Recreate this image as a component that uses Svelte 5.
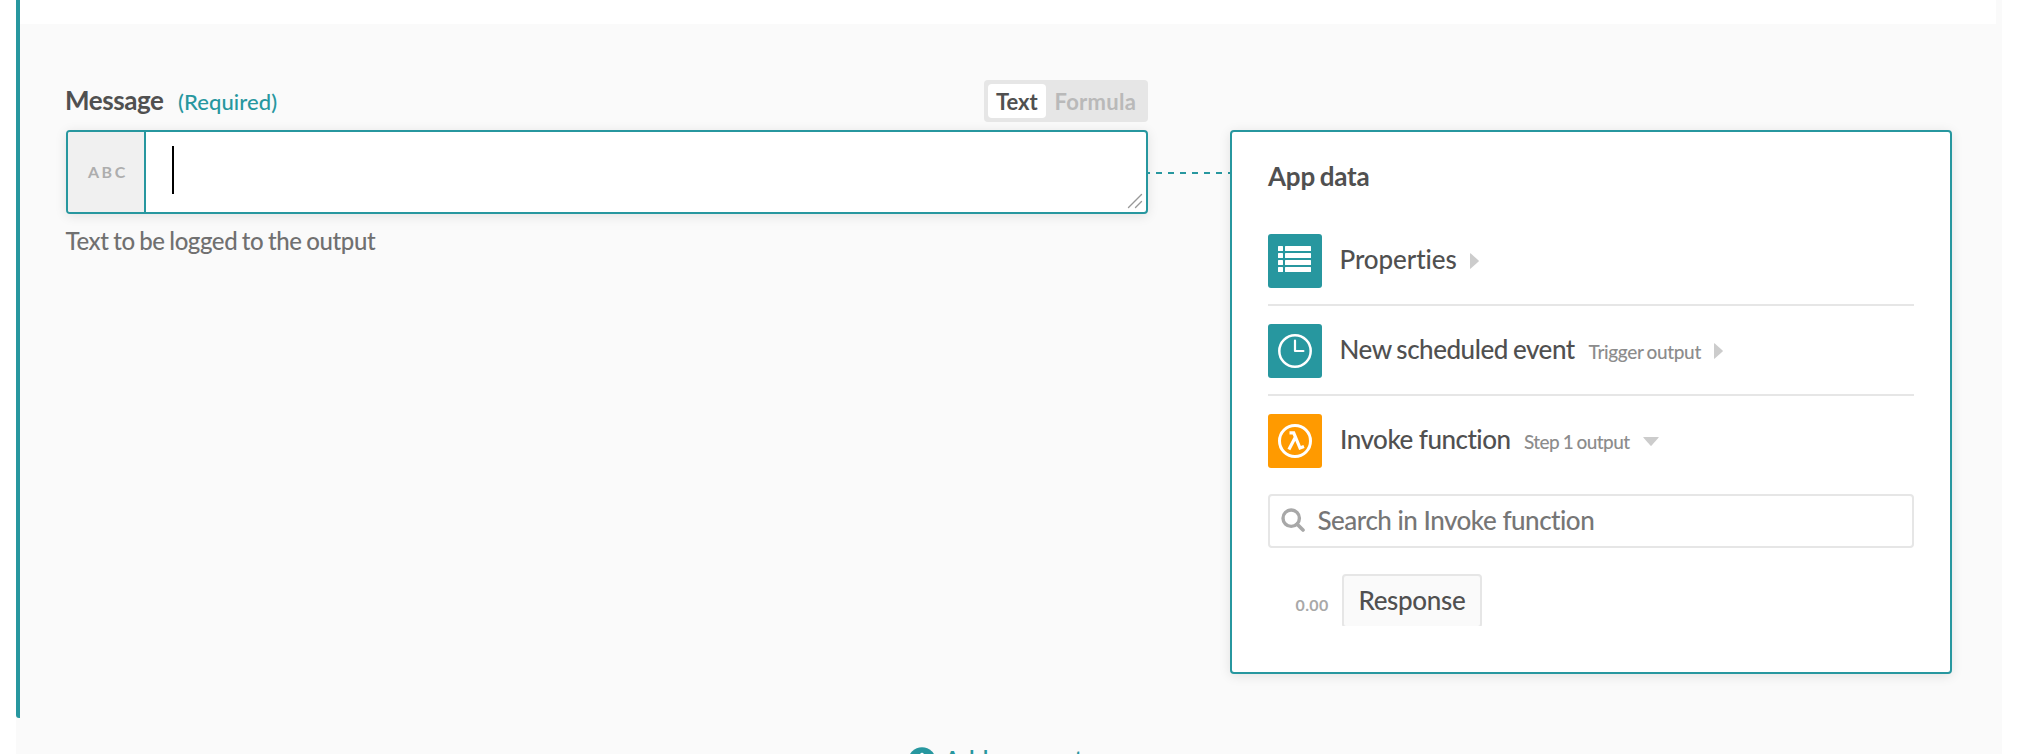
<script>
  let mode = $state('Text');
  const modes = ['Text', 'Formula'];
</script>

<main class="canvas">
  <section class="step">
    <div class="step-head"></div>
    <div class="step-body">
      <div class="field">
        <div class="field-top">
          <div class="label">
            <span class="label-name">Message</span>
            <span class="label-required">(Required)</span>
          </div>
          <div class="toggle">
            {#each modes as m}
              <button class={['toggle-item', m.toLowerCase(), { active: mode === m }]} onclick={() => (mode = m)}><span>{m}</span></button>
            {/each}
          </div>
        </div>
        <div class="input">
          <div class="input-type">ABC</div>
          <div class="input-area">
            <span class="caret"></span>
            <svg class="grip" width="16" height="16" viewBox="0 0 16 16">
              <path d="M1.5 14.5 14.5 1.5M8.5 14.5 14.5 8.5" fill="none" stroke="#989898" stroke-width="1.4" stroke-linecap="round" />
            </svg>
          </div>
        </div>
        <p class="hint">Text to be logged to the output</p>
      </div>

      <div class="connector"></div>

      <aside class="panel">
        <h2>App data</h2>

        <div class="row">
          <svg class="tile" width="54" height="54" viewBox="0 0 54 54">
            <rect width="54" height="54" rx="3" fill="#27979f" />
            <g fill="#fff">
              {#each [12, 19, 26, 33] as y}
                <rect x="10" {y} width="5" height="5" rx="0.5" />
                <rect x="17" {y} width="26" height="5" rx="0.5" />
              {/each}
            </g>
          </svg>
          <div class="row-text">
            <span class="name properties">Properties</span>
            <svg class="arrow" width="9" height="16" viewBox="0 0 9 16"><path d="M0 .6Q0 0 .8.5L8.6 7.4Q9.2 8 8.6 8.6L.8 15.5Q0 16 0 15.4Z" fill="#ccc" /></svg>
          </div>
        </div>

        <div class="row">
          <svg class="tile" width="54" height="54" viewBox="0 0 54 54">
            <rect width="54" height="54" rx="3" fill="#27979f" />
            <circle cx="27" cy="27" r="15.7" fill="none" stroke="#fff" stroke-width="2.5" />
            <path d="M27 16.6V27h8.4" fill="none" stroke="#fff" stroke-width="2.2" stroke-linecap="round" stroke-linejoin="round" />
          </svg>
          <div class="row-text">
            <span class="name event">New scheduled event</span>
            <span class="source trigger">Trigger output</span>
            <svg class="arrow" width="9" height="16" viewBox="0 0 9 16"><path d="M0 .6Q0 0 .8.5L8.6 7.4Q9.2 8 8.6 8.6L.8 15.5Q0 16 0 15.4Z" fill="#ccc" /></svg>
          </div>
        </div>

        <div class="row">
          <svg class="tile" width="54" height="54" viewBox="0 0 54 54">
            <rect width="54" height="54" rx="3" fill="#ff9a00" />
            <circle cx="27" cy="27" r="15.5" fill="none" stroke="#fff" stroke-width="3" />
            <path d="M21.5 18.8h4.2L32 34l4-1.6M27.2 23.5 20.9 35.6" fill="none" stroke="#fff" stroke-width="3.2" />
          </svg>
          <div class="row-text">
            <span class="name invoke">Invoke function</span>
            <span class="source action">Step 1 output</span>
            <svg class="arrow" width="16" height="9" viewBox="0 0 16 9"><path d="M.6 0Q0 0 .5.8L7.4 8.6Q8 9.2 8.6 8.6L15.5.8Q16 0 15.4 0Z" fill="#ccc" /></svg>
          </div>
        </div>

        <div class="search">
          <svg width="24" height="24" viewBox="0 0 24 24">
            <circle cx="10.2" cy="10.2" r="8.2" fill="none" stroke="#a8a8a8" stroke-width="3.4" />
            <path d="M16.2 16.2 22 22" stroke="#a8a8a8" stroke-width="3.6" stroke-linecap="round" />
          </svg>
          <span>Search in Invoke function</span>
        </div>

        <div class="results">
          <span class="kind">0.00</span>
          <span class="pill">Response</span>
        </div>
      </aside>
    </div>
  </section>

  <div class="add-step">
    <svg width="28" height="28" viewBox="0 0 28 28">
      <circle cx="14" cy="14" r="13.8" fill="#27979f" />
      <path d="M14 7.5v13M7.5 14h13" stroke="#fff" stroke-width="3.6" stroke-linecap="round" />
    </svg>
    <span>Add a new step</span>
  </div>
</main>

<style>
  :global(body) {
    margin: 0;
    background: #fff;
    overflow: hidden;
  }
  .canvas {
    box-sizing: border-box;
    width: 1986px;
    height: 754px;
    margin-left: 16px;
    overflow: hidden;
    background: #fafafa;
    font-family: Lato, sans-serif;
    font-size: 26px;
    font-weight: 500;
    color: #505050;
  }
  .step {
    box-sizing: border-box;
    height: 718px;
    border-left: 4px solid #27979f;
    border-bottom-left-radius: 3px;
  }
  .step-head {
    height: 24px;
    width: 1976px;
    background: #fff;
  }
  .step-body {
    display: flex;
    align-items: flex-start;
    padding: 56px 0 0 46px;
  }
  .field {
    width: 1082px;
  }
  .field-top {
    display: flex;
    justify-content: space-between;
    height: 50px;
  }
  .label {
    display: flex;
    align-items: baseline;
    height: 40px;
    line-height: 40px;
    margin-left: -1px;
  }
  .label-name {
    width: 113px;
    font-weight: 700;
    letter-spacing: -0.44px;
  }
  .label-required {
    font-size: 22px;
    letter-spacing: 0.1px;
    color: #27979f;
  }
  .toggle {
    box-sizing: border-box;
    display: flex;
    width: 164px;
    height: 42px;
    padding: 4px;
    border-radius: 4px;
    background: #e6e6e6;
  }
  .toggle-item {
    height: 34px;
    padding: 0;
    border: 0;
    border-radius: 4px;
    background: none;
    font: 700 22px/34px Lato, sans-serif;
    color: #b9b9b9;
  }
  .toggle-item span {
    display: block;
    padding-top: 1px;
    line-height: 33px;
  }
  .toggle-item.text {
    width: 58px;
    letter-spacing: -0.04px;
  }
  .toggle-item.formula {
    width: 99px;
    padding-left: 1px;
    letter-spacing: 0.28px;
  }
  .toggle-item.active {
    background: #fff;
    color: #505050;
  }
  .input {
    box-sizing: border-box;
    display: flex;
    height: 84px;
    border: 2px solid #27979f;
    border-radius: 4px;
    background: #fff;
    box-shadow: 0 2px 12px rgba(0, 0, 0, 0.1);
  }
  .input-type {
    box-sizing: border-box;
    width: 78px;
    padding-left: 20px;
    border-right: 2px solid #27979f;
    border-radius: 2px 0 0 2px;
    background: #f0f0f0;
    font-size: 16px;
    font-weight: 700;
    line-height: 80px;
    letter-spacing: 2.5px;
    color: #adadad;
  }
  .input-area {
    position: relative;
    flex: 1;
    padding: 14px 26px;
  }
  .caret {
    display: block;
    width: 2px;
    height: 48px;
    background: #000;
  }
  .grip {
    position: absolute;
    right: 3px;
    bottom: 3px;
  }
  .hint {
    margin: 10px 0 0 -0.5px;
    font-size: 24px;
    line-height: 34px;
    letter-spacing: -0.4px;
    word-spacing: -1.03px;
    color: #707070;
  }
  .connector {
    width: 82px;
    height: 2px;
    margin-top: 92px;
    background: repeating-linear-gradient(90deg, #27979f 0 6px, transparent 6px 12px) -4px 0 / 96px 2px;
  }
  .panel {
    box-sizing: border-box;
    width: 722px;
    height: 544px;
    margin-top: 50px;
    padding: 0 36px;
    border: 2px solid #27979f;
    border-radius: 4px;
    background: #fff;
    box-shadow: 0 2px 12px rgba(0, 0, 0, 0.1);
  }
  h2 {
    margin: 24px 0 0;
    font-size: 26px;
    font-weight: 700;
    line-height: 40px;
    letter-spacing: -0.2px;
    word-spacing: -1.4px;
  }
  .row {
    box-sizing: border-box;
    display: flex;
    height: 90px;
    padding: 18px 0;
    border-bottom: 2px solid #e6e6e6;
  }
  h2 + .row {
    margin-top: 20px;
  }
  .row:nth-of-type(3) {
    border: 0;
  }
  .tile {
    flex: none;
    margin-right: 17.5px;
  }
  .row-text {
    display: flex;
    align-items: baseline;
    height: 50px;
    line-height: 50px;
  }
  .arrow {
    align-self: center;
    margin-top: 4px;
  }
  .name {
    white-space: nowrap;
  }
  .properties {
    width: 130.5px;
    letter-spacing: -0.09px;
  }
  .event {
    width: 249px;
    letter-spacing: -0.47px;
    word-spacing: -1px;
  }
  .invoke {
    width: 184px;
    letter-spacing: -0.49px;
    word-spacing: -0.2px;
    margin-left: 0.5px;
  }
  .source {
    font-size: 19px;
    color: #8c8c8c;
    white-space: nowrap;
  }
  .trigger {
    width: 125px;
    letter-spacing: -0.34px;
    word-spacing: -1.2px;
  }
  .action {
    width: 118.5px;
    letter-spacing: -0.57px;
    word-spacing: -0.8px;
  }
  .search {
    box-sizing: border-box;
    display: flex;
    height: 54px;
    margin-top: 8px;
    padding: 12px 0 0 11.5px;
    border: 2px solid #e6e6e6;
    border-radius: 4px;
    color: #767676;
    line-height: 50px;
    letter-spacing: -0.49px;
  }
  .search svg {
    margin-left: -0.5px;
  }
  .search span {
    margin: -13px 0 0 12.5px;
  }
  .results {
    display: flex;
    height: 52px;
    margin-top: 26px;
    padding-left: 27.5px;
    overflow: hidden;
  }
  .kind {
    width: 46.5px;
    font-size: 16px;
    font-weight: 700;
    line-height: 61px;
    letter-spacing: 0.38px;
    color: #a8a8a8;
  }
  .pill {
    box-sizing: border-box;
    width: 140px;
    height: 54px;
    padding-left: 14.5px;
    border: 2px solid #e6e6e6;
    border-radius: 4px;
    background: #fafafa;
    line-height: 48px;
    letter-spacing: -0.35px;
  }
  .add-step {
    display: flex;
    gap: 8px;
    margin: 29px 0 0 891.5px;
    line-height: 26px;
    letter-spacing: -0.75px;
    white-space: nowrap;
    color: #27979f;
  }
</style>
